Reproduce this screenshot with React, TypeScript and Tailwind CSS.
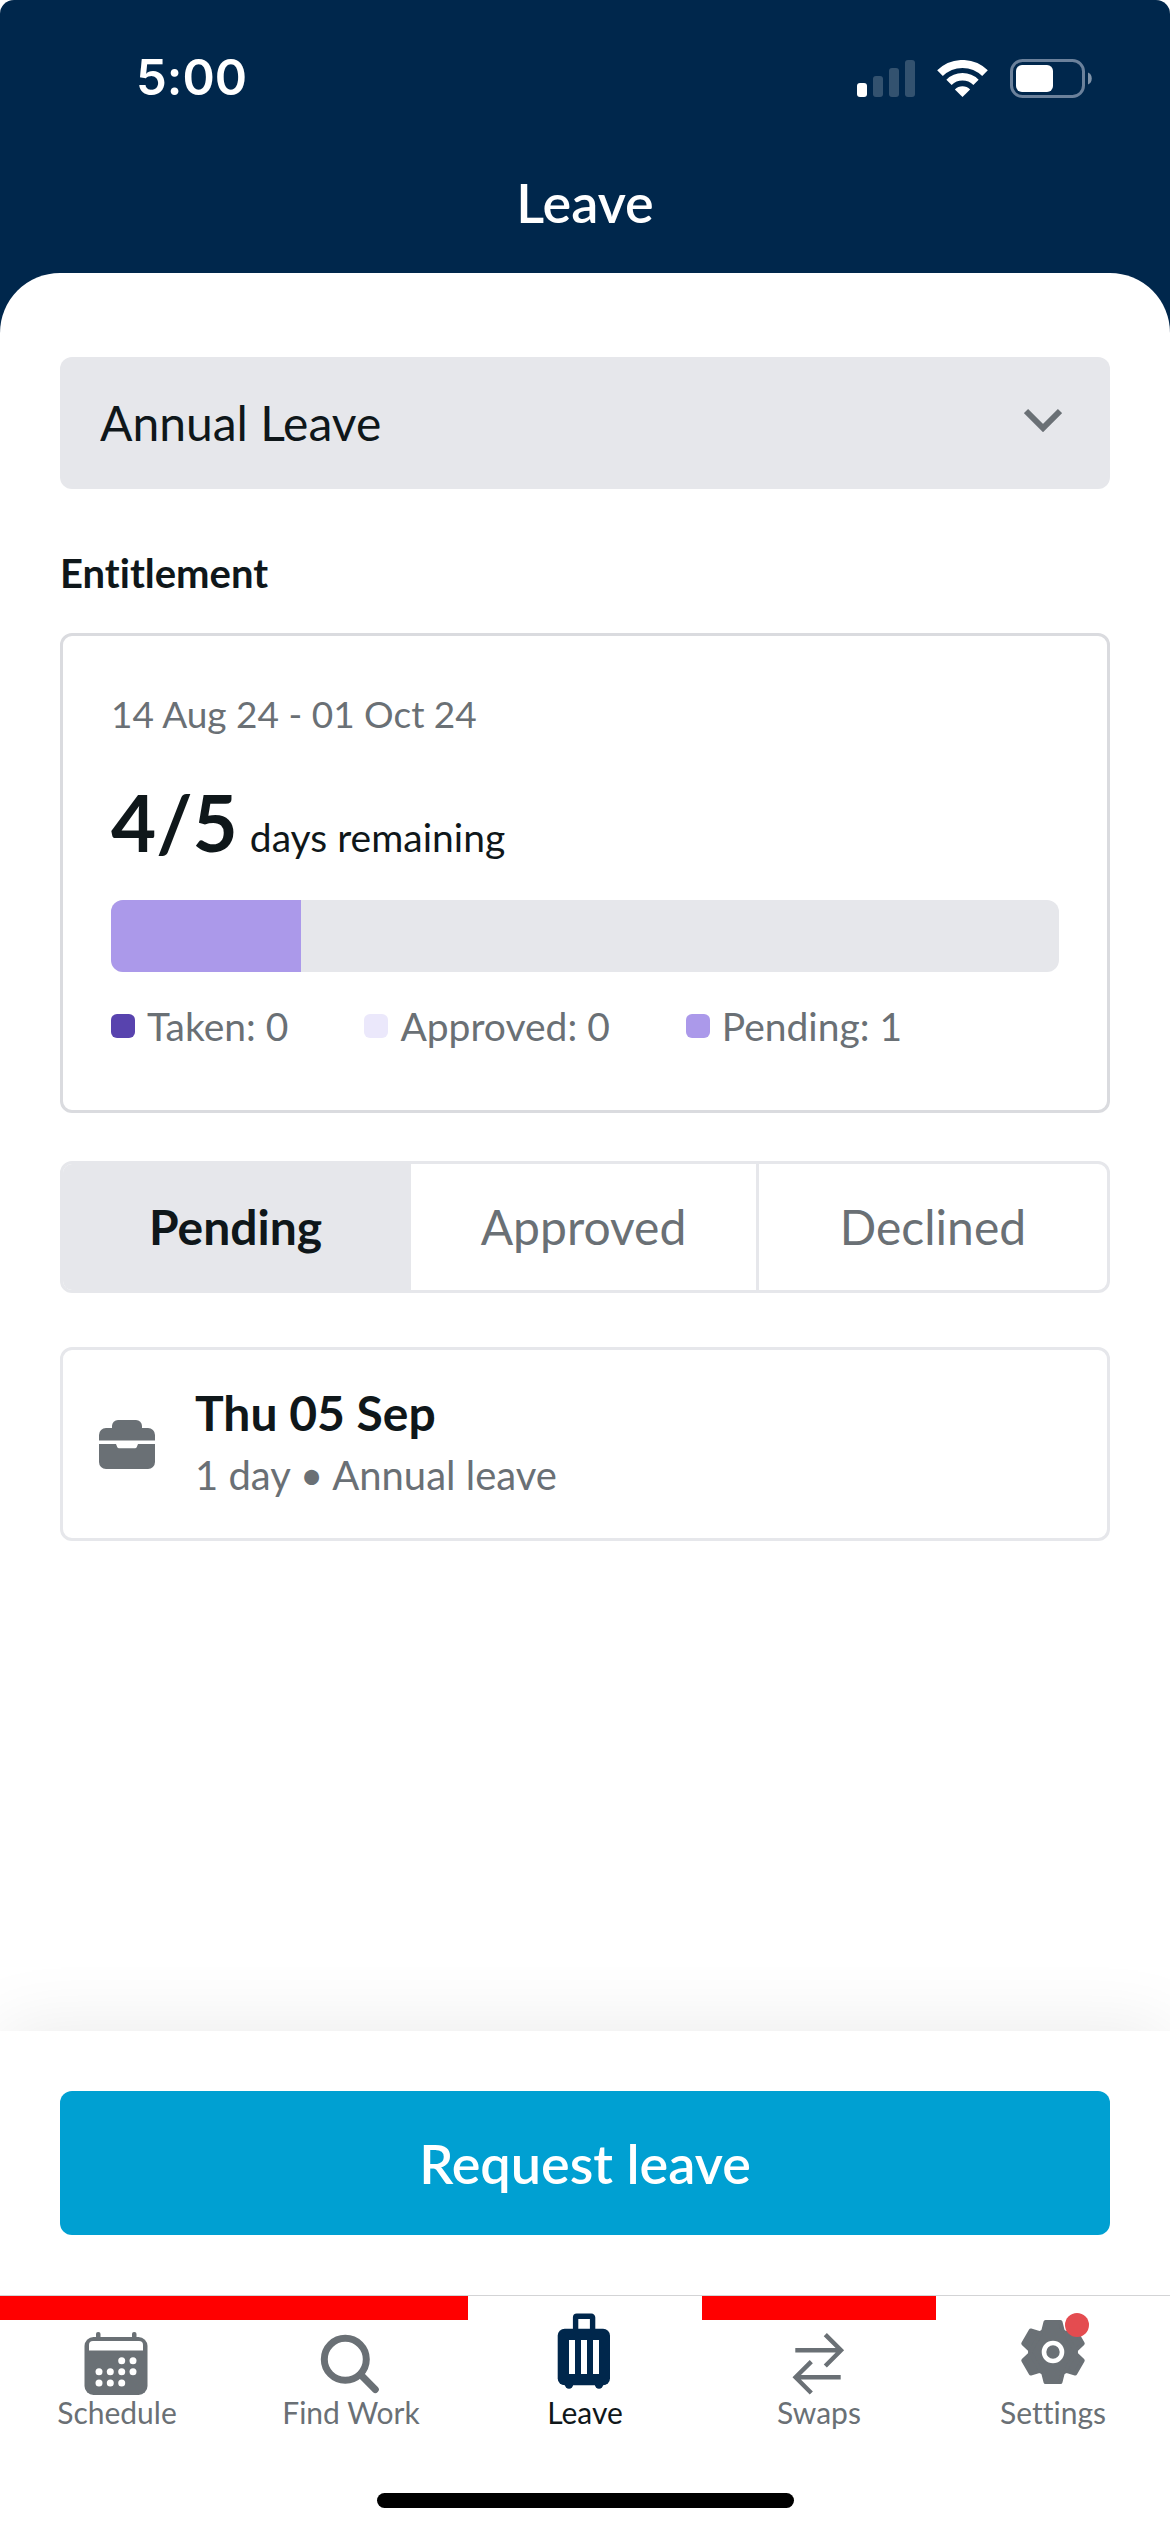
import { useState } from "react";
import type { ReactNode } from "react";

const LEGEND = [
  { label: "Taken", value: 0, swatch: "bg-[#5843ae]" },
  { label: "Approved", value: 0, swatch: "bg-[#ebe8fb]" },
  { label: "Pending", value: 1, swatch: "bg-[#ab99ea]" },
];

const TABS = ["Pending", "Approved", "Declined"];

const TOTAL_DAYS = 5;
const PENDING_DAYS = 1;

function SignalIcon() {
  return (
    <svg width="58" height="37" viewBox="0 0 58 37" fill="#fff" aria-hidden="true">
      <rect x="0" y="23" width="10" height="14" rx="3" />
      <rect x="16" y="16" width="10" height="21" rx="3" opacity="0.2" />
      <rect x="32" y="8" width="10" height="29" rx="3" opacity="0.2" />
      <rect x="48" y="0" width="10" height="37" rx="3" opacity="0.2" />
    </svg>
  );
}

function WifiIcon() {
  return (
    <svg width="51" height="37" viewBox="0 0 51 37" fill="none" stroke="#fff" aria-hidden="true">
      <path d="M3 13.2a32 32 0 0 1 45 0" strokeWidth="8" />
      <path d="M12 22.3a19.2 19.2 0 0 1 27 0" strokeWidth="7.5" />
      <path d="M25.500 37l-7.600-7.600a10.800 10.800 0 0 1 15.200 0z" fill="#fff" stroke="none" />
    </svg>
  );
}

function BatteryIcon() {
  return (
    <svg width="82" height="39" viewBox="0 0 82 39" fill="none" aria-hidden="true">
      <rect x="1.500" y="1.500" width="72" height="36" rx="11" stroke="#6b819b" strokeWidth="3" />
      <rect x="6" y="6" width="37" height="27" rx="6" fill="#fff" />
      <path d="M78 13.500c5 1.500 5 10.500 0 12z" fill="#8093a8" />
    </svg>
  );
}

function BriefcaseIcon() {
  return (
    <svg width="56" height="49" viewBox="0 0 56 49" fill="#6a7075" className="shrink-0" aria-hidden="true">
      <path d="M0 20.500V15a7 7 0 0 1 7-7h6V6a6 6 0 0 1 6-6h18a6 6 0 0 1 6 6v2h6a7 7 0 0 1 7 7v5.500z" />
      <path d="M0 24h17l1.200 3a2 2 0 0 0 2 1.300h15.600a2 2 0 0 0 2-1.300L39 24h17v18a7 7 0 0 1-7 7H7a7 7 0 0 1-7-7z" />
    </svg>
  );
}

function CalendarIcon() {
  const dots = [
    [52.7, 60.7], [64, 60.7],
    [30, 71.7], [41.3, 71.7], [52.7, 71.7], [64, 71.7],
    [30, 83], [41.3, 83], [52.7, 83],
  ];
  return (
    <svg width="96" height="96" viewBox="0 0 96 96" fill="#6a7075" aria-hidden="true">
      <rect x="15.500" y="37" width="63" height="58" rx="9" />
      <rect x="27" y="32" width="4.500" height="8" rx="2" />
      <rect x="63" y="32" width="4.500" height="8" rx="2" />
      <path d="M20 50.500V45a4 4 0 0 1 4-4h46a4 4 0 0 1 4 4v5.500z" fill="#fff" />
      {dots.map(([x, y]) => (
        <circle key={`${x}-${y}`} cx={x} cy={y} r="3.500" fill="#fff" />
      ))}
    </svg>
  );
}

function SearchIcon() {
  return (
    <svg width="96" height="96" viewBox="0 0 96 96" fill="none" stroke="#6a7075" strokeWidth="7" aria-hidden="true">
      <circle cx="42.300" cy="59.300" r="21" />
      <path d="M57.500 74.500l14.800 15" strokeLinecap="round" />
    </svg>
  );
}

function SuitcaseIcon() {
  return (
    <svg width="96" height="96" viewBox="0 0 96 96" fill="#00274c" aria-hidden="true">
      <path d="M38.600 32V17.500a1.200 1.200 0 0 1 1.200-1.200h14.600a1.200 1.200 0 0 1 1.200 1.200V32" fill="none" stroke="#00274c" strokeWidth="5.400" />
      <rect x="20.700" y="28.700" width="52.300" height="56.500" rx="7" />
      <circle cx="32" cy="84.500" r="4.200" />
      <circle cx="62" cy="84.500" r="4.200" />
      <path d="M32 40h6v34h-6zM44 40h6v34h-6zM56 40h6v34h-6z" fill="#fff" />
    </svg>
  );
}

function SwapIcon() {
  return (
    <svg width="96" height="96" viewBox="0 0 96 96" fill="none" stroke="#6a7075" strokeWidth="4.400" aria-hidden="true">
      <path d="M24.300 50.300H70M54.300 34.600L70 50.300 54.300 66" />
      <path d="M69.700 77.300H25M40.300 61.600L24.600 77.300 40.300 93" />
    </svg>
  );
}

function GearIcon() {
  return (
    <svg width="96" height="96" viewBox="0 0 96 96" fill="#6a7075" aria-hidden="true">
      <circle cx="48" cy="52" r="25" />
      {[0, 60, 120, 180, 240, 300].map((angle) => (
        <path
          key={angle}
          d="M40.500 22h15l2.500 10h-20z"
          stroke="#6a7075"
          strokeWidth="4"
          strokeLinejoin="round"
          transform={`rotate(${angle} 48 52)`}
        />
      ))}
      <circle cx="48" cy="52" r="9" stroke="#fff" strokeWidth="4.600" />
      <circle cx="72" cy="25" r="12" fill="#e44c50" />
    </svg>
  );
}

type NavItem = { label: string; icon: ReactNode; active?: boolean; flagged?: boolean };

const NAV: NavItem[] = [
  { label: "Schedule", icon: <CalendarIcon />, flagged: true },
  { label: "Find Work", icon: <SearchIcon />, flagged: true },
  { label: "Leave", icon: <SuitcaseIcon />, active: true },
  { label: "Swaps", icon: <SwapIcon />, flagged: true },
  { label: "Settings", icon: <GearIcon /> },
];

export default function App() {
  const [tab, setTab] = useState("Pending");

  return (
    <div className="flex min-h-screen flex-col bg-white font-[Lato,sans-serif] text-[#0f171a] [font-variant-ligatures:none]">
      <div className="rounded-t-[14px] bg-[#00274c]">
        {/* Status bar */}
        <div className="flex h-39 items-center justify-between pr-[78px] pl-[136px] text-white">
          <span className="font-[Inter,sans-serif] text-[49px] font-semibold">5:00</span>
          <div className="flex items-center gap-[22px]">
            <SignalIcon />
            <WifiIcon />
            <BatteryIcon />
          </div>
        </div>

        <header className="flex h-23 items-center justify-center text-white">
          <h1 className="text-[54px] font-semibold">Leave</h1>
        </header>

        <div className="mt-[25px] h-15 rounded-t-[60px] bg-white" />
      </div>

      <main className="flex grow flex-col px-15 pt-6">
        {/* Leave type */}
        <div className="relative">
          <select
            aria-label="Leave type"
            className="h-33 w-full appearance-none rounded-xl bg-[#e6e7eb] px-10 text-[48px]"
          >
            <option>Annual Leave</option>
          </select>
          <svg
            width="38"
            height="24"
            viewBox="0 0 38 24"
            fill="none"
            stroke="#6a7075"
            strokeWidth="6"
            className="pointer-events-none absolute top-[51px] right-12"
            aria-hidden="true"
          >
            <path d="M2 3l17 17L36 3" />
          </svg>
        </div>

        {/* Entitlement */}
        <h2 className="mt-15 text-[40px] leading-[48px] font-bold">Entitlement</h2>
        <section className="mt-9 rounded-xl border-3 border-[#dadbdf] px-12 pt-14 pb-[62px]">
          <p className="text-[37px] leading-[44px] text-[#6a7075]">14 Aug 24 - 01 Oct 24</p>
          <p className="mt-9 flex items-baseline gap-3 leading-[100px]">
            <span className="text-[78px] font-bold">4/5</span>
            <span className="text-[39px] leading-none">days remaining</span>
          </p>
          <div className="mt-7 h-18 overflow-hidden rounded-xl bg-[#e6e7eb]">
            <div
              className="h-full bg-[#ab99ea]"
              style={{ width: `${(PENDING_DAYS / TOTAL_DAYS) * 100}%` }}
            />
          </div>
          <ul className="mt-8 flex gap-19 text-[39px] leading-[44px] text-[#6a7075]">
            {LEGEND.map((item) => (
              <li key={item.label} className="flex items-center gap-3">
                <span className={`size-6 rounded-md ${item.swatch}`} />
                {item.label}: {item.value}
              </li>
            ))}
          </ul>
        </section>

        {/* Request status */}
        <div className="mt-12 grid h-33 grid-cols-3 divide-x-3 divide-[#e6e7eb] overflow-hidden rounded-xl border-3 border-[#e6e7eb] text-[48px]">
          {TABS.map((name) => (
            <button
              key={name}
              type="button"
              aria-pressed={tab === name}
              onClick={() => setTab(name)}
              className={tab === name ? "bg-[#e6e7eb] font-bold" : "text-[#6a7075]"}
            >
              {name}
            </button>
          ))}
        </div>

        <article className="mt-[54px] flex items-center gap-10 rounded-xl border-3 border-[#e6e7eb] px-9 py-8 leading-[62px]">
          <BriefcaseIcon />
          <div>
            <h3 className="text-[48px] font-bold">Thu 05 Sep</h3>
            <p className="text-[40px] text-[#6a7075]">1 day • Annual leave</p>
          </div>
        </article>
      </main>

      <div className="bg-white px-15 py-15 shadow-[0_0_72px_rgba(0,0,0,0.09)]">
        <button type="button" className="h-36 w-full rounded-xl bg-[#00a0d2] text-[54px] font-semibold text-white">
          Request leave
        </button>
      </div>

      {/* Bottom navigation */}
      <nav className="relative border-t border-[#d3d4d6] bg-white pb-6">
        <div className="grid grid-cols-5">
          {NAV.map((item) => (
            <a
              key={item.label}
              href="#"
              className={`relative flex flex-col items-center pt-1 text-[30px] leading-[32px] ${item.active ? "text-[#0f171a]" : "text-[#6a7075]"}`}
            >
              {item.flagged && <span className="absolute inset-x-0 top-0 h-6 bg-[#ff0000]" />}
              {item.icon}
              {item.label}
            </a>
          ))}
        </div>
        <div className="mx-auto mt-[65px] h-[15px] w-[417px] rounded-full bg-black" />
      </nav>
    </div>
  );
}
